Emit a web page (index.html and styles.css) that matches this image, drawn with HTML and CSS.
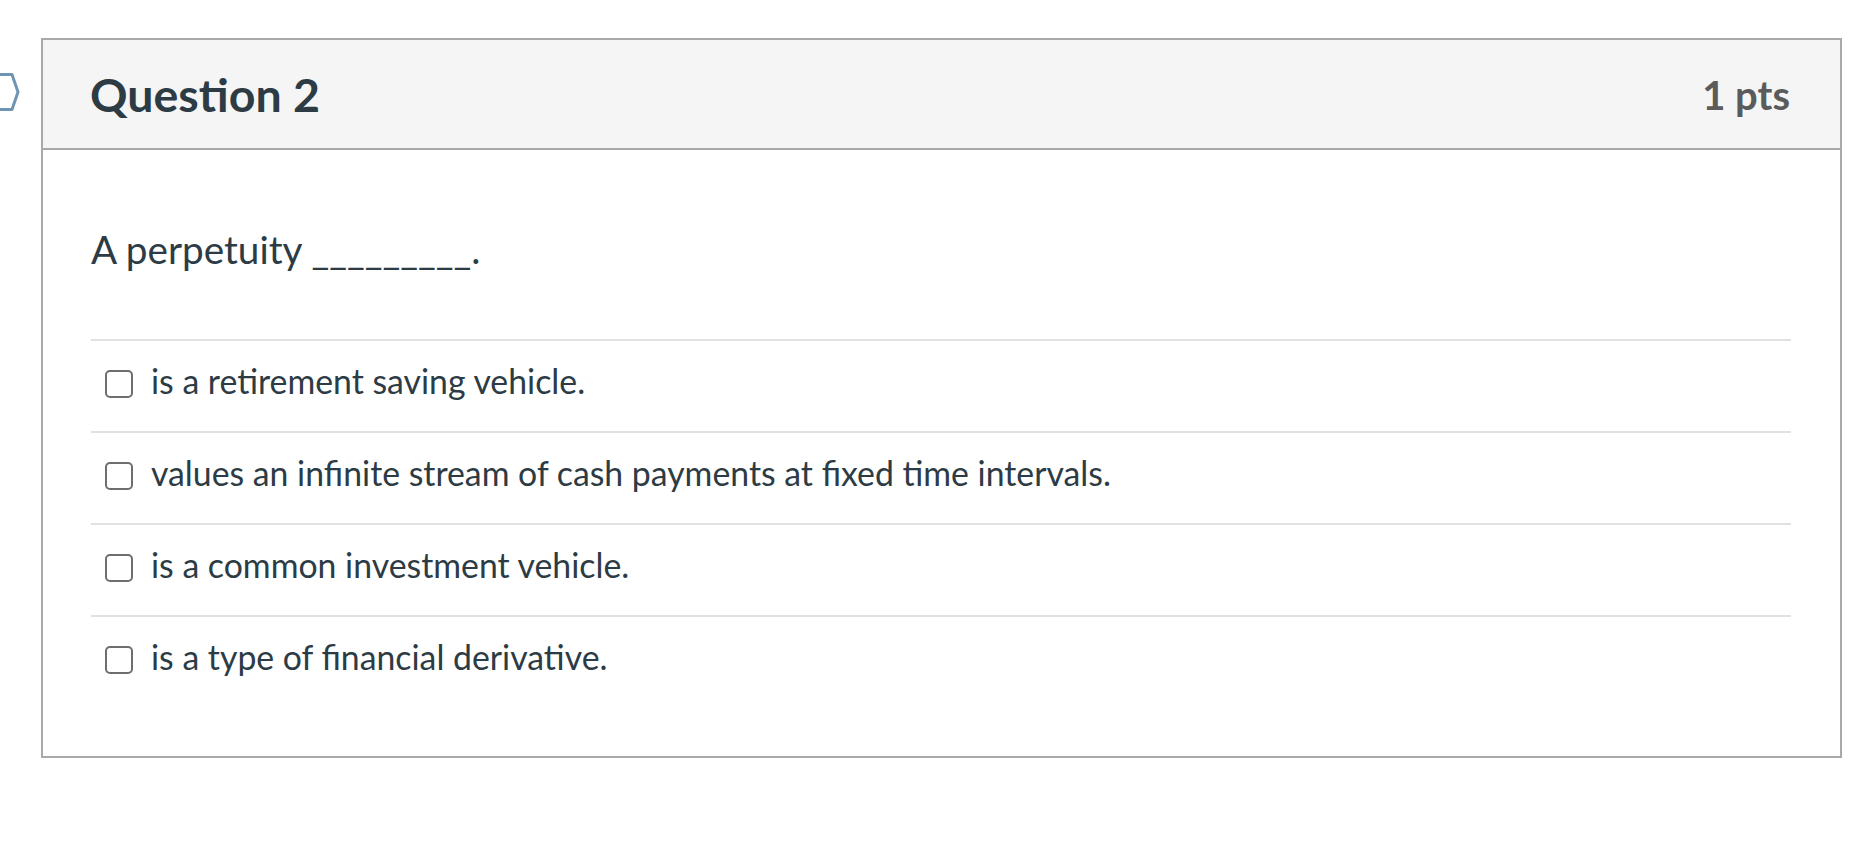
FILE: index.html
```html
<!DOCTYPE html>
<html lang="en">
<head>
<meta charset="utf-8">
<title>Question 2</title>
<link rel="stylesheet" href="styles.css">
</head>
<body>
<div class="page">
  <div class="gutter">
    <svg class="flag" width="22" height="40" viewBox="0 0 22 40" aria-hidden="true">
      <path d="M-2 2.5 H12 L18 20 L12 37.5 H-2" fill="none" stroke="#7094b4" stroke-width="3" stroke-linejoin="round"/>
    </svg>
  </div>
  <div class="question">
    <div class="q-header">
      <h2 class="q-name">Question 2</h2>
      <div class="q-points">1 pts</div>
    </div>
    <div class="q-body">
      <p class="q-text">A perpetuity _________.</p>
      <div class="answers">
        <label class="answer"><input type="checkbox" class="checkbox"><span class="answer-text">is a retirement saving vehicle.</span></label>
        <label class="answer"><input type="checkbox" class="checkbox"><span class="answer-text">values an infinite stream of cash payments at fixed time intervals.</span></label>
        <label class="answer"><input type="checkbox" class="checkbox"><span class="answer-text">is a common investment vehicle.</span></label>
        <label class="answer"><input type="checkbox" class="checkbox"><span class="answer-text">is a type of financial derivative.</span></label>
      </div>
    </div>
  </div>
</div>
</body>
</html>
```
FILE: styles.css
```css
html, body {
  margin: 0;
  padding: 0;
  background: #ffffff;
}

body {
  font-family: Lato, "Noto Sans", "Liberation Sans", sans-serif;
  color: #2d3b45;
}

.page {
  display: flex;
  align-items: flex-start;
  padding-top: 38px;
}

.gutter {
  flex: none;
  width: 41px;
}

.flag {
  display: block;
  margin-top: 34px;
  overflow: visible;
}

.question {
  flex: none;
  width: 1801px;
  box-sizing: border-box;
  border: 2px solid #a9a9a9;
  background: #ffffff;
}

.q-header {
  display: flex;
  justify-content: space-between;
  align-items: flex-start;
  background: #f5f5f5;
  border-bottom: 2px solid #a9a9a9;
  padding: 27px 50px 26px 47px;
}

.q-name {
  margin: 0;
  font-size: 46.5px;
  font-weight: 700;
  line-height: 55px;
  color: #2d3b45;
}

.q-points {
  margin-top: 4px;
  font-size: 40px;
  font-weight: 700;
  line-height: 1.2;
  color: #5b5b5b;
}

.q-body {
  padding: 75px 49px 49px 48px;
}

.q-text {
  margin: 0 0 66px;
  font-size: 38.7px;
  line-height: 48px;
}

.answers {
  display: flex;
  flex-direction: column;
}

.answer {
  display: flex;
  align-items: flex-start;
  border-top: 2px solid #e1e1e1;
  padding: 19px 0 29px 14px;
}

.checkbox {
  appearance: none;
  -webkit-appearance: none;
  flex: none;
  width: 28px;
  height: 28px;
  margin: 10px 18px 0 0;
  box-sizing: border-box;
  border: 2px solid #6e6e6e;
  border-radius: 5px;
  background: #ffffff;
}

.answer-text {
  font-size: 33.8px;
  line-height: 42px;
}
```
